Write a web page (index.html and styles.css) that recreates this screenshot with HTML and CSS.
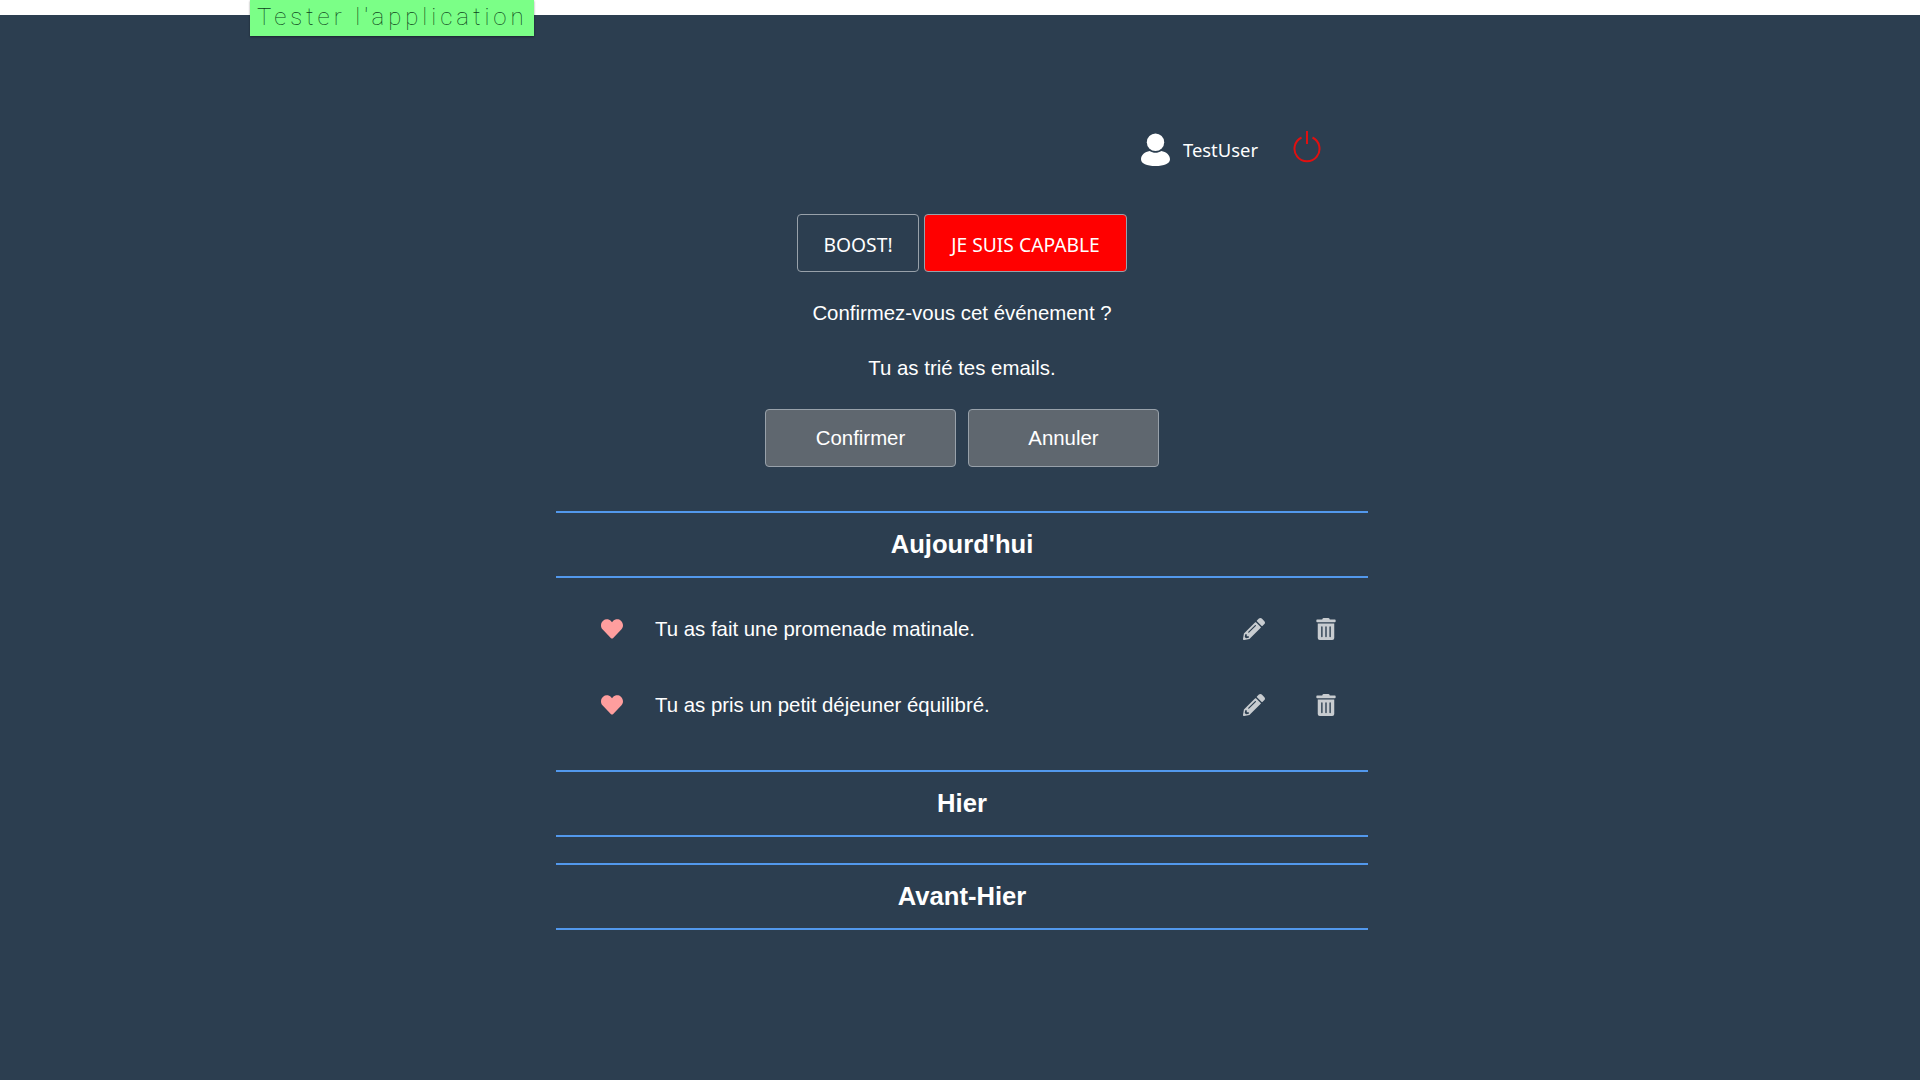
FILE: index.html
```html
<!DOCTYPE html>
<html lang="fr">
<head>
  <meta charset="UTF-8">
  <title>Boost</title>
  <link rel="stylesheet" href="styles.css">
</head>
<body>
  <a class="test-banner" href="#">Tester l'application</a>
  <div class="page">
    <header class="user-bar">
      <svg class="user-icon" viewBox="0 0 30 34"><circle cx="15" cy="9.5" r="9"/><path d="M9 18.500c3.500 2.500 8.500 2.500 12 0 5 .8 9 4.200 9 8.500 0 4.500-6 7-15 7S0 31.500 0 27c0-4.300 4-7.700 9-8.500z"/></svg>
      <span class="user-name">TestUser</span>
      <svg class="power-icon" viewBox="0 0 28 32"><path d="M8.500 6.500a12.500 12.500 0 1 0 11 0"/><path d="M14 0v13"/></svg>
    </header>

    <div class="mode-btns">
      <button class="mode-btn">BOOST!</button>
      <button class="mode-btn mode-btn-active">JE SUIS CAPABLE</button>
    </div>

    <p class="confirm-text">Confirmez-vous cet événement ?</p>
    <p class="confirm-text">Tu as trié tes emails.</p>
    <div class="confirm-btns">
      <button class="confirm-btn">Confirmer</button>
      <button class="confirm-btn">Annuler</button>
    </div>

    <section class="day">
      <h2 class="day-title">Aujourd'hui</h2>
      <ul class="events">
        <li class="event">
          <svg class="heart" viewBox="0 0 512 512"><path d="M462.300 62.600C407.500 15.900 326 24.200 275.700 76.200L256 96.500l-19.700-20.300C186.100 24.200 104.500 15.900 49.700 62.600c-62.800 53.600-66.100 149.800-9.900 207.900l193.500 199.800c12.500 12.900 32.800 12.900 45.300 0l193.500-199.800c56.300-58.100 53-154.300-9.800-207.900z"/></svg>
          <span class="event-text">Tu as fait une promenade matinale.</span>
          <svg class="tool pencil" viewBox="0 0 512 512"><path d="M497.900 142.100l-46.100 46.100c-4.700 4.700-12.300 4.700-17 0l-111-111c-4.700-4.700-4.700-12.300 0-17l46.100-46.100c18.700-18.700 49.100-18.700 67.900 0l60.100 60.100c18.800 18.700 18.800 49.100 0 67.900zM284.200 99.800L21.600 362.400.4 483.900c-2.900 16.400 11.400 30.600 27.800 27.800l121.500-21.300 262.600-262.600c4.700-4.700 4.700-12.300 0-17l-111-111c-4.800-4.700-12.400-4.700-17.100 0zM124.100 339.900c-5.500-5.500-5.500-14.300 0-19.800l154-154c5.500-5.500 14.300-5.500 19.800 0s5.500 14.300 0 19.800l-154 154c-5.500 5.500-14.300 5.500-19.800 0zM88 424h48v36.300l-64.500 11.300-31.100-31.100L51.700 376H88v48z"/></svg>
          <svg class="tool trash" viewBox="0 0 448 512"><path d="M32 464a48 48 0 0 0 48 48h288a48 48 0 0 0 48-48V128H32zm272-256a16 16 0 0 1 32 0v224a16 16 0 0 1-32 0zm-96 0a16 16 0 0 1 32 0v224a16 16 0 0 1-32 0zm-96 0a16 16 0 0 1 32 0v224a16 16 0 0 1-32 0zM432 32H312l-9.400-18.700A24 24 0 0 0 281.100 0H166.800a23.720 23.720 0 0 0-21.400 13.300L136 32H16A16 16 0 0 0 0 48v32a16 16 0 0 0 16 16h416a16 16 0 0 0 16-16V48a16 16 0 0 0-16-16z"/></svg>
        </li>
        <li class="event">
          <svg class="heart" viewBox="0 0 512 512"><path d="M462.300 62.600C407.500 15.900 326 24.200 275.700 76.200L256 96.500l-19.700-20.300C186.100 24.200 104.500 15.900 49.700 62.600c-62.800 53.600-66.100 149.800-9.900 207.900l193.500 199.800c12.500 12.900 32.800 12.900 45.300 0l193.500-199.800c56.300-58.100 53-154.300-9.800-207.900z"/></svg>
          <span class="event-text">Tu as pris un petit déjeuner équilibré.</span>
          <svg class="tool pencil" viewBox="0 0 512 512"><path d="M497.900 142.100l-46.100 46.100c-4.700 4.700-12.300 4.700-17 0l-111-111c-4.700-4.700-4.700-12.300 0-17l46.100-46.100c18.700-18.700 49.100-18.700 67.900 0l60.100 60.100c18.800 18.700 18.800 49.100 0 67.900zM284.200 99.800L21.600 362.400.4 483.900c-2.900 16.400 11.400 30.600 27.800 27.800l121.500-21.300 262.600-262.600c4.700-4.700 4.700-12.300 0-17l-111-111c-4.800-4.700-12.400-4.700-17.100 0zM124.100 339.900c-5.500-5.500-5.500-14.300 0-19.800l154-154c5.500-5.500 14.300-5.500 19.800 0s5.500 14.300 0 19.800l-154 154c-5.500 5.500-14.300 5.500-19.800 0zM88 424h48v36.300l-64.500 11.300-31.100-31.100L51.700 376H88v48z"/></svg>
          <svg class="tool trash" viewBox="0 0 448 512"><path d="M32 464a48 48 0 0 0 48 48h288a48 48 0 0 0 48-48V128H32zm272-256a16 16 0 0 1 32 0v224a16 16 0 0 1-32 0zm-96 0a16 16 0 0 1 32 0v224a16 16 0 0 1-32 0zm-96 0a16 16 0 0 1 32 0v224a16 16 0 0 1-32 0zM432 32H312l-9.400-18.700A24 24 0 0 0 281.100 0H166.800a23.720 23.720 0 0 0-21.400 13.300L136 32H16A16 16 0 0 0 0 48v32a16 16 0 0 0 16 16h416a16 16 0 0 0 16-16V48a16 16 0 0 0-16-16z"/></svg>
        </li>
      </ul>
    </section>

    <section class="day">
      <h2 class="day-title">Hier</h2>
    </section>
    <section class="day">
      <h2 class="day-title">Avant-Hier</h2>
    </section>
  </div>
</body>
</html>
```

FILE: styles.css
```css
:root {
  --bg-color: #2c3e50;
  --line-color: #5298ec;
  --border-color: #98a1aa;
  --text-color: #ffffff;
}
body {
  margin: 0;
  background-color: #ffffff;
  color: var(--text-color);
  font-family: "Liberation Sans", Arial, sans-serif;
}
.test-banner {
  position: absolute;
  z-index: 2;
  top: 0;
  left: 250px;
  width: 284px;
  height: 36px;
  line-height: 34px;
  box-sizing: border-box;
  padding-left: 7px;
  background-color: #7bff87;
  box-shadow: 0 1px 2px rgba(0,0,0,0.4);
  color: #0c3f1a;
  font-family: Roboto, sans-serif;
  font-weight: 100;
  font-size: 24px;
  letter-spacing: 3.95px;
  text-decoration: none;
  white-space: nowrap;
}
.page {
  margin-top: 15px;
  min-height: 1065px;
  box-sizing: border-box;
  padding: 97px 0 0 4px;
  background-color: var(--bg-color);
  display: flex;
  flex-direction: column;
  align-items: center;
}
.user-bar {
  width: 812px;
  height: 102px;
  display: flex;
  align-items: flex-start;
}
.user-icon {
  width: 29px;
  height: 33px;
  margin: 21px 0 0 585px;
  fill: #ffffff;
}
.user-name {
  margin: 25px 0 0 13px;
  width: 75px;
  font-family: "Noto Sans", sans-serif;
  font-size: 18.4px;
  line-height: 26px;
  white-space: nowrap;
}
.power-icon {
  width: 28px;
  height: 32px;
  margin: 19px 0 0 35px;
  fill: none;
  stroke: #e01010;
  stroke-width: 2;
}
.mode-btns {
  display: flex;
  gap: 5px;
}
.mode-btn {
  height: 58px;
  width: 122px;
  padding: 2px 0 0;
  border: 1px solid var(--border-color);
  border-radius: 4px;
  background-color: transparent;
  color: var(--text-color);
  font-family: "Noto Sans", sans-serif;
  font-size: 19.3px;
}
.mode-btn-active {
  width: 203px;
  background-color: #ff0000;
}
.confirm-text {
  margin: 0;
  font-size: 20.4px;
  line-height: 23px;
  padding-top: 30px;
}
.confirm-text + .confirm-text {
  padding-top: 32px;
}
.confirm-btns {
  display: flex;
  gap: 12px;
  margin-top: 29px;
  margin-bottom: 44px;
}
.confirm-btn {
  width: 191px;
  height: 58px;
  padding: 0;
  border: 1px solid var(--border-color);
  border-radius: 4px;
  background-color: #5f676f;
  color: var(--text-color);
  font-family: "Liberation Sans", Arial, sans-serif;
  font-size: 20.4px;
}
.day {
  width: 812px;
  margin-bottom: 25.4px;
}
.day-title {
  margin: 0;
  height: 63px;
  line-height: 62px;
  border-top: 2px solid var(--line-color);
  border-bottom: 2px solid var(--line-color);
  text-align: center;
  font-size: 25.6px;
  font-weight: bold;
}
.events {
  list-style: none;
  margin: 13px 0 2px;
  padding: 0;
}
.event {
  height: 76px;
  display: flex;
  align-items: center;
}
.heart {
  width: 22px;
  height: 22px;
  margin-left: 45px;
  fill: #ff9e9e;
}
.event-text {
  flex: 1;
  margin-left: 32px;
  font-size: 20.4px;
}
.tool {
  height: 22px;
  fill: #c8ccd0;
}
.pencil {
  width: 22px;
}
.trash {
  width: 20px;
  margin: 0 32px 0 51px;
}
```
